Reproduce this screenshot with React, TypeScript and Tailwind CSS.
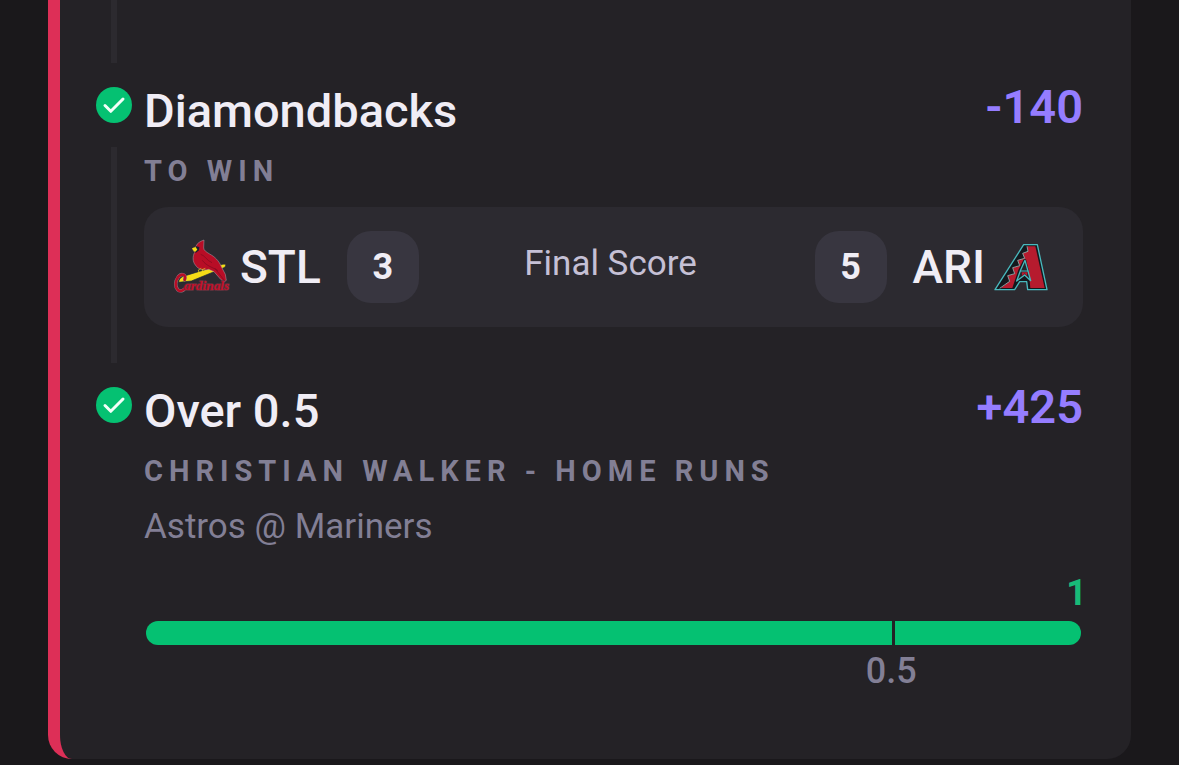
import type { ReactNode } from "react";

function WonIcon() {
  return (
    <svg viewBox="0 0 36 36" className="size-9 shrink-0" role="img" aria-label="Won">
      <circle cx="18" cy="18" r="18" fill="#05c172" />
      <path d="M9 18.5 14.8 24.3 27 12" fill="none" stroke="#f2fff9" strokeWidth="3" strokeLinecap="round" strokeLinejoin="round" />
    </svg>
  );
}

function CardinalsLogo() {
  return (
    <svg viewBox="22 26 180 168" className="h-14 w-15 shrink-0" role="img" aria-label="Cardinals">
      <path d="M42 156 Q42 141 62 136 L174 102 Q182 99 183 105 Q183 110 178 112 L80 152Z" fill="#f5dc16" stroke="#15243e" strokeWidth="2" />
      <path d="M118 29 C107 33 97 38 94 48 L83 56 90 66 C83 79 84 94 92 104 C101 118 116 121 132 117 L148 124 168 147 178 155 185 150 182 132 171 111 C163 91 150 79 135 71 C124 64 118 61 117 53 Z" fill="#b80d26" stroke="#a8a2ad" strokeWidth="1.5" strokeLinejoin="round" />
      <path d="M104 130 101 119 110 114M117 128 112 118 122 114" stroke="#f5dc16" strokeWidth="2" fill="none" />
      <path d="M94 48 104 50 103 60 94 67 89 65 83 57Z" fill="#18202f" />
      <path d="M82 54 93 50 98 58 91 65 87 62Z" fill="#f5dc16" />
      <path d="M108 72C121 75 126 91 142 97M113 90C126 108 145 111 160 121M150 113 178 149" fill="none" stroke="#7c0b1e" strokeWidth="2" />
      <path d="M60 148 C66 132 50 128 41 139 C31 152 31 170 39 178 C48 186 58 180 64 171" fill="none" stroke="#8e7f8b" strokeWidth="10" strokeLinecap="round" />
      <path d="M60 148 C66 132 50 128 41 139 C31 152 31 170 39 178 C48 186 58 180 64 171" fill="none" stroke="#b80d26" strokeWidth="8" strokeLinecap="round" />
      <text x="58" y="178" fontFamily="Liberation Serif, serif" fontSize="40" fontStyle="italic" fontWeight="700" fill="#c20f29" stroke="#67323f" strokeWidth="4" paintOrder="stroke">ardinals</text>
    </svg>
  );
}

function ArizonaLogo() {
  return (
    <svg viewBox="42 39 164 144" className="h-12 w-14 shrink-0" role="img" aria-label="Arizona Diamondbacks">
      <path d="M132 44H173L202 179H144L141 155H120L105 179H46Z" fill="#14181d" stroke="#48b9bd" strokeWidth="4" strokeLinejoin="round" />
      <path d="M142 49H167L195 174H152L147 120 139 88H132L116 120 98 174H64L90 154 84 137 105 131 99 113 120 107 114 91 135 85 129 70 145 64Z" fill="#b61b2e" />
      <path d="M142 49 145 64 129 70 135 85 114 91 120 107 99 113 105 131 84 137 90 154 60 175" fill="none" stroke="#8eb6b5" strokeWidth="2.5" />
      <path d="M136 91 153 152 135 135 111 153 123 120Z" fill="#24252b" stroke="#48b9bd" strokeWidth="4" strokeLinejoin="round" />
      <path d="M126 127H144L141 138 135 130 128 138Z" fill="#b61b2e" />
      <path d="M122 123H146" stroke="#48b9bd" strokeWidth="3" />
    </svg>
  );
}

type LegProps = {
  title: string;
  market: string;
  odds: string;
  last?: boolean;
  children: ReactNode;
};

function Leg({ title, market, odds, last = false, children }: LegProps) {
  return (
    <li className="flex gap-3">
      <div className="flex w-9 shrink-0 flex-col items-center gap-6">
        <WonIcon />
        {!last && <div className="w-1.5 grow bg-[#2c2a2f]" />}
      </div>
      <div className="min-w-0 grow pb-9">
        <div className="flex items-start justify-between">
          <h2 className="text-[47px] leading-12 font-medium text-[#f0edf5]">{title}</h2>
          <span className="text-[47px] leading-10 font-semibold text-[#957dff]">{odds}</span>
        </div>
        <p className="mt-4 text-[29px] leading-10 font-bold tracking-[6px] text-[#827f95] uppercase">{market}</p>
        {children}
      </div>
    </li>
  );
}

function Score({ value }: { value: number }) {
  return (
    <span className="flex size-18 items-center justify-center rounded-3xl bg-[#383640] text-[36px] leading-10 font-bold text-[#f0edf5]">
      {value}
    </span>
  );
}

export default function App() {
  return (
    <main className="min-h-screen bg-[#1a181b] px-12 pb-1.5 font-['Roboto',sans-serif]">
      <section className="rounded-b-3xl border-l-12 border-[#dd2f57] bg-[#242226] pr-12 pb-[30px] pl-9">
        <div className="flex h-[63px] w-9 justify-center">
          <div className="w-1.5 bg-[#2c2a2f]" />
        </div>
        <ul className="flex flex-col gap-6 pt-6">
          <Leg title="Diamondbacks" market="To win" odds="-140">
            <div className="mt-4 grid grid-cols-[1fr_auto_1fr] items-center rounded-3xl bg-[#2c2a30] py-6 pr-[34px] pl-7">
              <div className="flex items-center gap-2">
                <CardinalsLogo />
                <span className="mr-[18px] text-[46px] leading-12 font-medium text-[#f0edf5]">STL</span>
                <Score value={3} />
              </div>
              <span className="pb-1.5 text-[35px] leading-10 text-[#c5c0d5]">Final Score</span>
              <div className="flex items-center justify-end gap-2">
                <Score value={5} />
                <span className="ml-[18px] text-[46px] leading-12 font-medium text-[#f0edf5]">ARI</span>
                <ArizonaLogo />
              </div>
            </div>
          </Leg>
          <Leg title="Over 0.5" market="Christian Walker - Home Runs" odds="+425" last>
            <p className="mt-4 text-[35px] leading-10 text-[#827f95]">Astros @ Mariners</p>
            <div className="-mr-1 mt-[22px] text-right text-[36px] leading-12 font-bold text-[#18bb78]">1</div>
            <div className="mx-0.5 mt-1 grid h-6 grid-cols-[4fr_1fr] gap-[3px] overflow-hidden rounded-full" role="img" aria-label="1 of 0.5 home runs">
              <div className="bg-[#05c172]" />
              <div className="bg-[#05c172]" />
            </div>
            <div className="mt-1 flex w-4/5 justify-end pr-1">
              <span className="flex w-0 justify-center text-[36px] leading-11 font-medium text-[#827f95]">0.5</span>
            </div>
          </Leg>
        </ul>
      </section>
    </main>
  );
}
